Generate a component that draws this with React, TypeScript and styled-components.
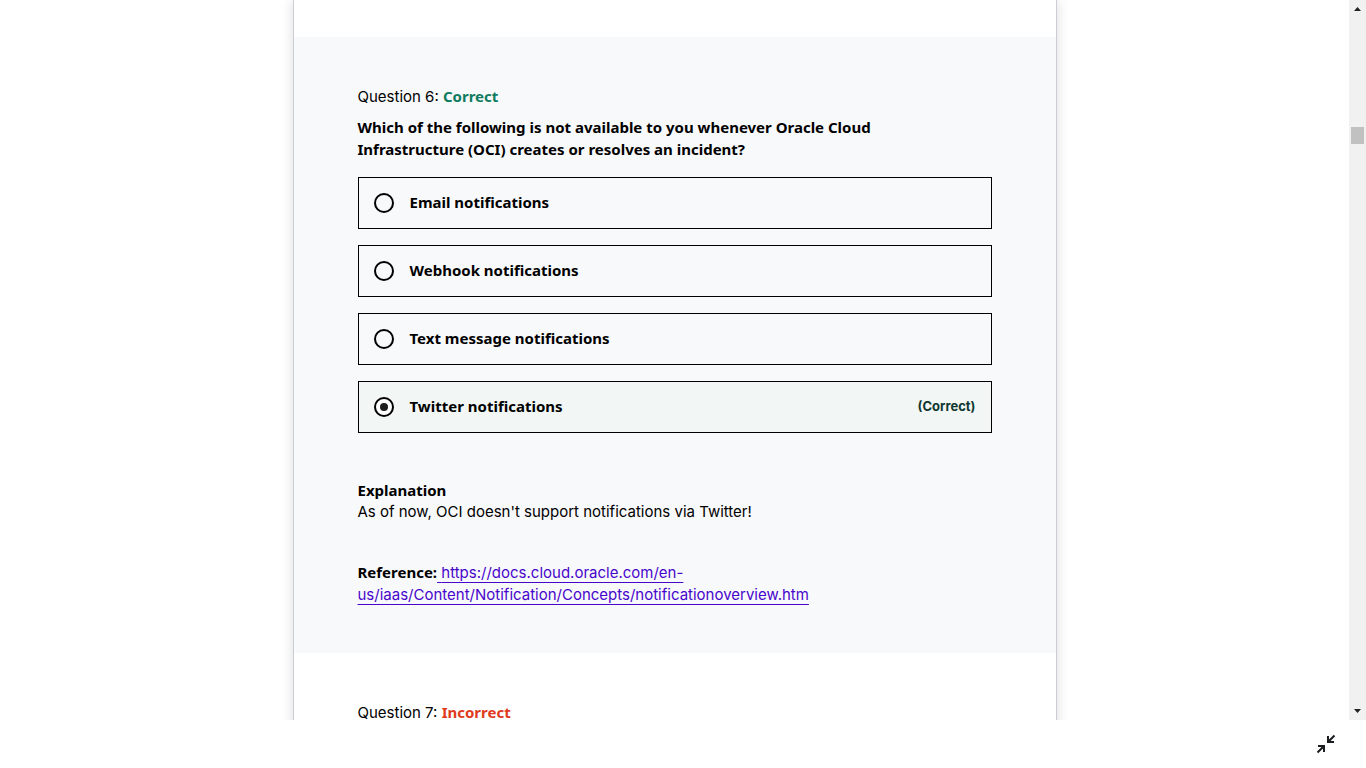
import React from 'react';
import styled, { createGlobalStyle } from 'styled-components';

const bodyFont = 'Inter, "Liberation Sans", sans-serif';
const boldFont = '"Noto Sans", "Liberation Sans", sans-serif';

const GlobalStyle = createGlobalStyle`
  *, *::before, *::after { box-sizing: border-box; }
  body {
    margin: 0;
    background: #fff;
    color: #000;
    font-family: ${bodyFont};
    font-size: 15px;
    font-weight: 400;
    line-height: 22px;
  }
`;

const Page = styled.div`
  display: flex;
  flex-direction: column;
  height: 100vh;
`;

const Viewport = styled.div`
  flex: 1;
  min-height: 0;
  display: flex;
`;

const Content = styled.main`
  flex: 1;
  min-width: 0;
  overflow: hidden;
  display: flex;
  justify-content: center;
  align-items: flex-start;
`;

const Panel = styled.div`
  width: 100%;
  max-width: 764px;
  border: solid #ccced6;
  border-width: 0 1px;
  box-shadow: 0 0 12px rgba(0, 0, 0, 0.14);
`;

const PreviousEnd = styled.div`
  height: 37px;
`;

const Question = styled.section<{ $shaded?: boolean }>`
  padding: 49px 64px 47px;
  background: ${(p) => (p.$shaded ? '#f8f9fb' : '#fff')};
`;

const QuestionHeader = styled.div`
  height: 22px;
  margin-bottom: 8px;
`;

const Strong = styled.strong`
  font-family: ${boldFont};
  font-weight: 700;
  line-height: 20px;
`;

const Status = styled(Strong)<{ $correct?: boolean }>`
  color: ${(p) => (p.$correct ? '#0f7c5f' : '#e03a1c')};
`;

const Prompt = styled.h2`
  margin: 0;
  max-width: 600px;
  font-family: ${boldFont};
  font-size: 15px;
  font-weight: 700;
  line-height: 22px;
`;

const Options = styled.ul`
  list-style: none;
  margin: 17px 0 0;
  padding: 0;
  display: flex;
  flex-direction: column;
  gap: 16px;
`;

const Option = styled.label<{ $correct?: boolean }>`
  display: flex;
  align-items: center;
  height: 52px;
  padding: 0 15px;
  border: 1px solid #000;
  background: ${(p) => (p.$correct ? '#f2f7f5' : 'transparent')};
  font-family: ${boldFont};
  font-weight: 700;
`;

const Radio = styled.input`
  appearance: none;
  flex: none;
  display: flex;
  align-items: center;
  justify-content: center;
  width: 20px;
  height: 20px;
  margin: 0 16px 0 0;
  border: 2px solid #000;
  border-radius: 50%;

  &:checked { background: #fff; }
  &:checked::before {
    content: '';
    width: 8px;
    height: 8px;
    border-radius: 50%;
    background: #1c1d1f;
  }
`;

const OptionText = styled.span`
  flex: 1;
  padding-bottom: 2px;
`;

const Mark = styled.span`
  padding-bottom: 2px;
  font-family: ${bodyFont};
  font-size: 13px;
  color: #113731;
`;

const Explanation = styled.div`
  margin-top: 47px;
`;

const Heading = styled.h3`
  margin: 0 0 1px;
  font-family: ${boldFont};
  font-size: 15px;
  font-weight: 700;
  line-height: 20px;
`;

const Text = styled.p`
  margin: 0 0 39px;
`;

const Reference = styled.p`
  margin: 0;
`;

const Link = styled.a`
  color: #4805cc;
  text-decoration: underline;
  text-decoration-thickness: 1px;
  text-underline-offset: 4px;
  text-decoration-skip-ink: none;
`;

const ScrollTrack = styled.div`
  width: 17px;
  background: #f1f1f1;
  display: flex;
  flex-direction: column;
  align-items: center;
`;

const ScrollArrow = styled.svg`
  display: block;
  width: 17px;
  height: 17px;
  fill: #222;
`;

const ScrollBefore = styled.div`
  height: 110px;
`;

const Thumb = styled.div`
  width: 13px;
  height: 17px;
  margin-bottom: auto;
  background: #c1c1c1;
`;

const Footer = styled.footer`
  flex: none;
  display: flex;
  justify-content: flex-end;
  align-items: center;
  height: 48px;
  padding-right: 28px;
`;

const CollapseButton = styled.button`
  display: flex;
  padding: 0;
  border: 0;
  background: none;
  color: #1c1d1f;
`;

const options = [
  { text: 'Email notifications' },
  { text: 'Webhook notifications' },
  { text: 'Text message notifications' },
  { text: 'Twitter notifications', correct: true },
];

export default function App() {
  return (
    <>
      <GlobalStyle />
      <Page>
        <Viewport>
          <Content>
            <Panel>
              <PreviousEnd />
              <Question $shaded>
                <QuestionHeader>
                  Question 6: <Status $correct>Correct</Status>
                </QuestionHeader>
                <Prompt>
                  Which of the following is not available to you whenever Oracle Cloud
                  Infrastructure (OCI) creates or resolves an incident?
                </Prompt>
                <Options>
                  {options.map((o) => (
                    <li key={o.text}>
                      <Option $correct={o.correct}>
                        <Radio type="radio" name="question-6" defaultChecked={o.correct} />
                        <OptionText>{o.text}</OptionText>
                        {o.correct && <Mark>(Correct)</Mark>}
                      </Option>
                    </li>
                  ))}
                </Options>
                <Explanation>
                  <Heading>Explanation</Heading>
                  <Text>As of now, OCI doesn't support notifications via Twitter!</Text>
                  <Reference>
                    <Strong>Reference:</Strong>
                    <Link href="https://docs.cloud.oracle.com/en-us/iaas/Content/Notification/Concepts/notificationoverview.htm">
                      {' '}https://docs.cloud.oracle.com/en-us/iaas/Content/Notification/Concepts/notificationoverview.htm
                    </Link>
                  </Reference>
                </Explanation>
              </Question>
              <Question>
                <QuestionHeader>
                  Question 7: <Status>Incorrect</Status>
                </QuestionHeader>
              </Question>
            </Panel>
          </Content>
          <ScrollTrack aria-hidden="true">
            <ScrollArrow viewBox="0 0 17 17"><path d="M5 11h7L8.500 7z" /></ScrollArrow>
            <ScrollBefore />
            <Thumb />
            <ScrollArrow viewBox="0 0 17 17"><path d="M5 6h7L8.500 10z" /></ScrollArrow>
          </ScrollTrack>
        </Viewport>
        <Footer>
          <CollapseButton type="button" aria-label="Exit expanded view">
            <svg width="24" height="24" viewBox="0 0 24 24" fill="none" stroke="currentColor" strokeWidth="2">
              <path d="M20.500 3.500L14 10M14 4v6h6M3.500 20.500L10 14M4 14h6v6" />
              <path d="M14 6v4h4zM6 14h4v4z" fill="currentColor" stroke="none" />
            </svg>
          </CollapseButton>
        </Footer>
      </Page>
    </>
  );
}
